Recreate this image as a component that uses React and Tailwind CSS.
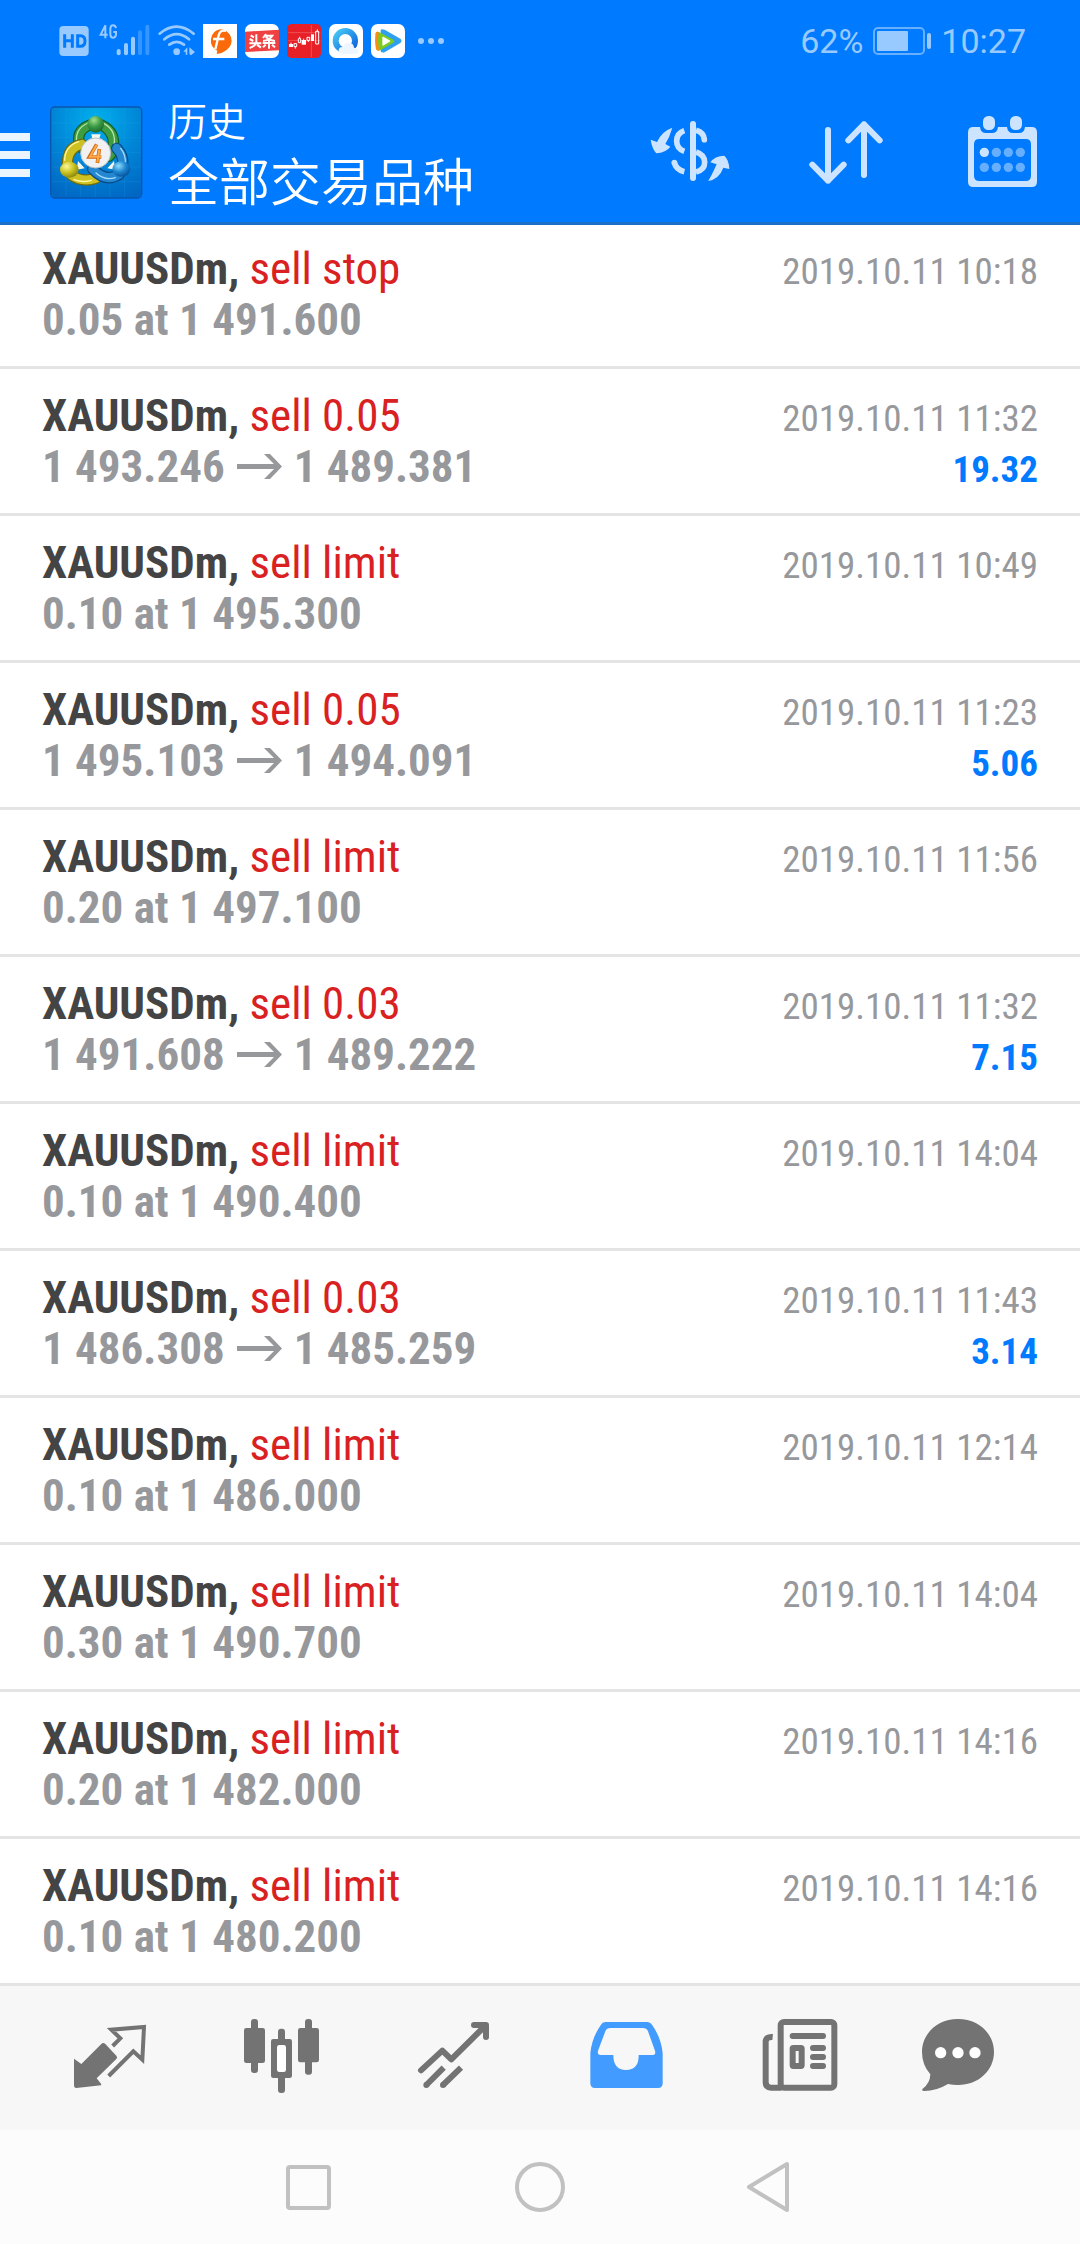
const TRADES = [
  { side: "sell stop", detail: "0.05 at 1 491.600", time: "2019.10.11 10:18" },
  { side: "sell 0.05", open: "1 493.246", close: "1 489.381", time: "2019.10.11 11:32", profit: "19.32" },
  { side: "sell limit", detail: "0.10 at 1 495.300", time: "2019.10.11 10:49" },
  { side: "sell 0.05", open: "1 495.103", close: "1 494.091", time: "2019.10.11 11:23", profit: "5.06" },
  { side: "sell limit", detail: "0.20 at 1 497.100", time: "2019.10.11 11:56" },
  { side: "sell 0.03", open: "1 491.608", close: "1 489.222", time: "2019.10.11 11:32", profit: "7.15" },
  { side: "sell limit", detail: "0.10 at 1 490.400", time: "2019.10.11 14:04" },
  { side: "sell 0.03", open: "1 486.308", close: "1 485.259", time: "2019.10.11 11:43", profit: "3.14" },
  { side: "sell limit", detail: "0.10 at 1 486.000", time: "2019.10.11 12:14" },
  { side: "sell limit", detail: "0.30 at 1 490.700", time: "2019.10.11 14:04" },
  { side: "sell limit", detail: "0.20 at 1 482.000", time: "2019.10.11 14:16" },
  { side: "sell limit", detail: "0.10 at 1 480.200", time: "2019.10.11 14:16" },
];

function SignalIcons() {
  return (
    <svg className="h-9 w-[138px]" viewBox="174 69 414 108" fill="#99caff" aria-hidden="true">
      <rect x="178" y="78" width="88" height="90" rx="12" />
      <g fill="none" stroke="#007aff" strokeWidth="9">
        <path d="M194 103v40M217 103v40M194 122h23M233 107v32h8q14 0 14-16t-14-16z" />
      </g>
      <g fill="none" stroke="#99caff" strokeWidth="6">
        <path d="M316 115V76l-14 28h21M348 84q-2-8-9-8t-8 10v18q1 9 8 9t9-9v-8h-8" />
      </g>
      <rect x="350" y="147" width="12" height="19" rx="6" />
      <rect x="372" y="129" width="12" height="37" rx="6" />
      <rect x="393" y="110" width="12" height="56" rx="6" />
      <rect x="414" y="91" width="12" height="75" rx="6" opacity=".35" />
      <rect x="436" y="74" width="12" height="92" rx="6" opacity=".35" />
      <g fill="none" stroke="#99caff" strokeWidth="8" strokeLinecap="round">
        <path d="M479 101q50-42 102 0M493 118q37-31 74 0M508 134q22-17 44 0" />
      </g>
      <circle cx="530" cy="155" r="10" />
      <path d="M550 155l12-13v22h-5v-9zM568 142l17 14-12 10q-5-2-5-8z" />
    </svg>
  );
}

function AppNotificationIcons() {
  return (
    <svg className="h-9 w-[204px]" viewBox="606 69 612 108" aria-hidden="true">
      <defs>
        <linearGradient id="browserRing" x1="0" y1="0" x2="1" y2="1">
          <stop offset="0" stopColor="#45c8f5" />
          <stop offset="1" stopColor="#0d62dc" />
        </linearGradient>
      </defs>
      <rect x="609" y="72" width="102" height="102" fill="#fff" />
      <path d="M660 88a34 34 0 0 1 20 62q-12 10-30 12l2-10a34 34 0 0 1 8-64z" fill="#fb6a0a" />
      <path d="M678 93q-18-5-22 13l-10 42M639 117h34" fill="none" stroke="#fff" strokeWidth="7" />

      <rect x="735" y="72" width="102" height="102" rx="20" fill="#fff" />
      <path d="M735 95l102-6v62l-102 5z" fill="#f04142" />
      <g fill="none" stroke="#fff" strokeWidth="6">
        <path d="M769 103v24q-3 12-20 17M748 130h36M752 106l10 6M749 117l11 6M771 134l12 9" />
        <path d="M798 102l-9 12M796 107h21q-8 13-28 16M797 111q12 10 28 12M788 129h38M807 120v26M797 134l-8 8M816 134l9 8" />
      </g>

      <rect x="861" y="72" width="102" height="102" rx="14" fill="#e71f26" />
      <path d="M865 98h96M865 122h96M934 75v96" stroke="#f3676b" strokeWidth="2" />
      <g fill="#fff">
        <rect x="867" y="132" width="12" height="9" />
        <rect x="905" y="120" width="13" height="14" />
        <rect x="933" y="103" width="9" height="20" />
      </g>
      <path d="M882 131h8v9h-8zM886 140v6M895 116h7v12h-7zM899 110v6M921 112h8v9h-8zM925 121v5M947 94h9v38h-9zM952 88v6M873 128v4M911 116v4" fill="none" stroke="#fff" strokeWidth="3" />

      <rect x="987" y="72" width="102" height="102" rx="20" fill="#fff" />
      <circle cx="1036" cy="122" r="29" fill="none" stroke="url(#browserRing)" strokeWidth="18" />
      <path d="M1030 162q-14-1-14-12 1-10 13-9 3-14 18-13 14 2 15 15 13 0 14 10-1 9-12 9z" fill="#eef7ff" />

      <rect x="1113" y="72" width="102" height="102" rx="20" fill="#fff" />
      <path d="M1142 89q4-3 12 0l47 27q7 6 0 13l-46 27q-10 4-13-2z" fill="#2f9ff0" />
      <path d="M1127 99q4-7 14-1l39 21q6 4 0 9l-38 22q-10 5-14-3-4-24-1-48z" fill="#7dcb1e" />
      <path d="M1127 99q3-5 9-3-5 28 1 56-7 0-9-5-4-24-1-48z" fill="#ff8a1c" />
      <path d="M1149 112l20 11-20 12z" fill="#fff" stroke="#fff" strokeWidth="4" strokeLinejoin="round" />
    </svg>
  );
}

function StatusBar() {
  return (
    <div className="flex h-[81px] items-center justify-between pl-[58px] pr-[54px] text-[34px] leading-none text-[#99caff]">
      <div className="flex items-center gap-1.5">
        <SignalIcons />
        <AppNotificationIcons />
        <svg className="ml-1 h-2 w-[30px]" viewBox="0 0 30 8" fill="#99caff" aria-hidden="true">
          <circle cx="5" cy="4" r="3" />
          <circle cx="15" cy="4" r="3" />
          <circle cx="25" cy="4" r="3" />
        </svg>
      </div>
      <div className="flex items-center gap-2.5">
        <span>62%</span>
        <svg className="h-7 w-[58px]" viewBox="0 0 58 28" aria-hidden="true">
          <rect x="1" y="1" width="50" height="26" rx="4" fill="none" stroke="#66b0ff" strokeWidth="2" />
          <rect x="4" y="4" width="31" height="20" rx="1" fill="#99caff" />
          <rect x="54" y="6" width="4" height="16" rx="2" fill="#99caff" />
        </svg>
        <span>10:27</span>
      </div>
    </div>
  );
}

function MetaTraderLogo() {
  return (
    <svg className="size-24" viewBox="144 46 288 288" aria-hidden="true">
      <defs>
        <radialGradient id="tile" cx=".5" cy=".15" r=".9">
          <stop offset="0" stopColor="#00b0ee" />
          <stop offset=".55" stopColor="#0084d6" />
          <stop offset="1" stopColor="#0068c4" />
        </radialGradient>
        <radialGradient id="greenBall" cx=".4" cy=".25" r=".8">
          <stop offset="0" stopColor="#a4e08c" />
          <stop offset=".5" stopColor="#3b9a45" />
          <stop offset="1" stopColor="#17642a" />
        </radialGradient>
        <radialGradient id="yellowBall" cx=".35" cy=".3" r=".8">
          <stop offset="0" stopColor="#fdf79a" />
          <stop offset=".5" stopColor="#c9c21f" />
          <stop offset="1" stopColor="#7c7a10" />
        </radialGradient>
        <radialGradient id="blueBall" cx=".35" cy=".3" r=".8">
          <stop offset="0" stopColor="#8fdcfb" />
          <stop offset=".5" stopColor="#1d86d2" />
          <stop offset="1" stopColor="#064a93" />
        </radialGradient>
      </defs>
      <rect x="152" y="52" width="273" height="273" rx="12" fill="url(#tile)" stroke="#0a56ae" strokeWidth="4" />
      <path d="M198 56v266M242 56v266M286 56v266M330 56v266M374 56v266M156 100h266M156 144h266M156 188h266M156 232h266M156 276h266" stroke="#39b5ef" strokeWidth="1.5" opacity=".3" />
      <g fill="none" strokeLinecap="round">
        <path d="M240 172q-16-50 30-66M304 106q46 22 34 74-4 14-12 20" stroke="#135c23" strokeWidth="34" />
        <path d="M240 172q-16-50 30-66M304 106q46 22 34 74-4 14-12 20" stroke="#3f9c40" strokeWidth="27" />
        <path d="M230 158q-6-40 34-58M312 102q38 20 30 68" stroke="#b5e5a6" strokeWidth="4" />
        <path d="M246 164q-44 8-44 60M214 256q32 24 74 10" stroke="#6d6a0e" strokeWidth="34" />
        <path d="M246 164q-44 8-44 60M214 256q32 24 74 10" stroke="#cdc022" strokeWidth="27" />
        <path d="M236 156q-42 14-42 56M222 270q26 10 52 2" stroke="#fff79d" strokeWidth="4" />
        <path d="M350 176q22 22 18 52M358 254q-40 26-80-16" stroke="#074a87" strokeWidth="34" />
        <path d="M350 176q22 22 18 52M358 254q-40 26-80-16" stroke="#2487cf" strokeWidth="27" />
        <path d="M362 176q16 20 14 46M346 264q-32 10-58-14" stroke="#a5deff" strokeWidth="4" />
      </g>
      <path d="M274 134h28l-6 18h-18zM234 214l20 22-24 4zM342 214l-20 22 24 4z" fill="#f3f7ee" />
      <circle cx="287" cy="104" r="25" fill="url(#greenBall)" />
      <ellipse cx="208" cy="240" rx="28" ry="24" fill="url(#yellowBall)" />
      <ellipse cx="364" cy="238" rx="27" ry="23" fill="url(#blueBall)" />
      <circle cx="287" cy="190" r="45" fill="#f1f1f4" stroke="#b9bfc6" strokeWidth="3" />
      <path d="M290 164l-22 38h36M298 178l-6 42" fill="none" stroke="#cf6a10" strokeWidth="11" />
      <path d="M290 165l-20 36h33M298 180l-6 38" fill="none" stroke="#ffa94a" strokeWidth="6" />
    </svg>
  );
}

function Header() {
  return (
    <header className="border-b-3 border-[#1a6fc9] bg-[#007aff] text-white">
      <StatusBar />
      <div className="flex h-[141px] items-center pt-0.5">
        <button type="button" aria-label="Menu" className="flex w-[30px] flex-col gap-2.5 pt-1">
          <span className="h-2 bg-[#ebf5ff]" />
          <span className="h-2 bg-[#ebf5ff]" />
          <span className="h-2 bg-[#ebf5ff]" />
        </button>
        <div className="ml-[18px] shrink-0">
          <MetaTraderLogo />
        </div>
        <div className="ml-6 pb-2 font-['Noto_Sans_CJK_SC',sans-serif] font-[350]">
          <h1 className="text-[39px] leading-[60px]">历史</h1>
          <p className="text-[51px] leading-[60px]">全部交易品种</p>
        </div>
        <div className="ml-auto flex">
          <button type="button" aria-label="Profit display" className="flex w-[156px] justify-center">
            <svg className="size-24" viewBox="66 45 288 288" aria-hidden="true">
              <g fill="none" stroke="#cce4ff" strokeWidth="17">
                <path d="M193 122q-23 8-23 31t23 31M193 245q-26-6-30-29" />
                <path d="M228 121q24 7 25 28" />
                <path d="M228 186q26 8 26 31t-26 29" />
              </g>
              <circle cx="163" cy="218" r="8.5" fill="#cce4ff" />
              <circle cx="253" cy="149" r="8.5" fill="#cce4ff" />
              <rect x="210" y="93" width="18" height="180" rx="9" fill="#cce4ff" />
              <path d="M157 113q-8 28-21 49l15 8q-13 18-42 20-13-14-17-41l19 7q14-32 46-43z" fill="#cce4ff" />
              <path d="M264 273q8-10 26-50l-19-6q13-19 42-20 14 13 15 40l-18-4q-12 34-46 40z" fill="#cce4ff" />
            </svg>
          </button>
          <button type="button" aria-label="Sort" className="flex w-[156px] justify-center">
            <svg className="size-24" viewBox="534 45 288 288" fill="none" stroke="#cce4ff" strokeWidth="18" strokeLinecap="round" strokeLinejoin="round" aria-hidden="true">
              <path d="M624 120v152M577 224l47 48 47-48M732 255V103M685 151l47-48 47 48" />
            </svg>
          </button>
          <button type="button" aria-label="Calendar" className="flex w-[156px] justify-center">
            <svg className="size-24" viewBox="1002 45 288 288" fill="#cce4ff" aria-hidden="true">
              <path fillRule="evenodd" d="M1060 111h20q2 18 18 18h18q16 0 18-18h27q2 18 18 18h18q16 0 18-18h20q16 0 16 16v148q0 16-16 16h-175q-16 0-16-16V127q0-16 16-16zM1078 147q-16 0-16 16v94q0 16 16 16h139q16 0 16-16v-94q0-16-16-16z" />
              <rect x="1089" y="78" width="36" height="42" rx="16" />
              <rect x="1170" y="78" width="36" height="42" rx="16" />
              <circle cx="1093" cy="187" r="14" />
              <g fill="#66afff">
                <circle cx="1129" cy="187" r="14" />
                <circle cx="1165" cy="187" r="14" />
                <circle cx="1201" cy="187" r="14" />
                <circle cx="1093" cy="232" r="14" />
                <circle cx="1129" cy="232" r="14" />
                <circle cx="1165" cy="232" r="14" />
                <circle cx="1201" cy="232" r="14" />
              </g>
            </svg>
          </button>
        </div>
      </div>
    </header>
  );
}

function PriceArrow() {
  return (
    <svg className="h-[25px] w-[45px]" viewBox="0 0 45 25" fill="#97989c" role="img" aria-label="to">
      <path d="M0 10h37l-10-10h6l12 12.5-12 12.5h-6l10-10H0z" />
    </svg>
  );
}

function TradeRow({ trade }) {
  return (
    <li className="border-b-3 border-[#e4e4e4] px-[42px] py-[21px] first:pt-[18px] last:border-b-0">
      <div className="flex h-[51px] items-baseline justify-between text-[45px] leading-[51px]">
        <p>
          <span className="font-bold text-[#444444]">XAUUSDm, </span>
          <span className="text-[#d92122]">{trade.side}</span>
        </p>
        <time className="text-[37px] text-[#97989c]">{trade.time}</time>
      </div>
      <div className="flex h-[51px] items-baseline justify-between text-[45px] font-bold leading-[51px] text-[#97989c]">
        {trade.detail ? (
          <p>{trade.detail}</p>
        ) : (
          <p className="flex items-center gap-3">
            <span>{trade.open}</span>
            <PriceArrow />
            <span>{trade.close}</span>
          </p>
        )}
        {trade.profit && <p className="text-[37px] text-[#007aff]">{trade.profit}</p>}
      </div>
    </li>
  );
}

function QuotesIcon() {
  return (
    <svg className="size-24" viewBox="6 27 288 288" fill="#737373" aria-hidden="true">
      <path d="M42 176l22 16 60-60q6-6 12 0l33 35q5 5 0 10l-59 58 14 18-1 3-74 8q-7 0-7-8z" />
      <path d="M158 138l23-23-27-26 98-8-5 98-27-25-74 74" fill="none" stroke="#737373" strokeWidth="12" />
    </svg>
  );
}

function ChartIcon() {
  return (
    <svg className="size-24" viewBox="522 27 288 288" fill="#737373" aria-hidden="true">
      <rect x="573" y="57" width="21" height="162" rx="9" />
      <rect x="552" y="84" width="63" height="105" rx="7" />
      <rect x="735" y="57" width="21" height="167" rx="9" />
      <rect x="714" y="84" width="63" height="103" rx="7" />
      <rect x="654" y="86" width="21" height="193" rx="9" />
      <rect x="633" y="117" width="63" height="117" rx="7" />
      <rect x="651" y="135" width="27" height="81" rx="7" fill="#fff" />
    </svg>
  );
}

function TradeIcon() {
  return (
    <svg className="size-24" viewBox="18 27 288 288" fill="none" stroke="#737373" strokeWidth="18" aria-hidden="true">
      <path d="M63 211l64-59 27 26 98-97" strokeLinecap="round" strokeLinejoin="round" />
      <path d="M222 75h36v36" strokeLinecap="round" strokeLinejoin="round" />
      <path d="M79 255l52-52M129 255l54-52" />
      <path d="M79 255h0.1M129 255h0.1" strokeLinecap="round" />
    </svg>
  );
}

function HistoryIcon() {
  return (
    <svg className="size-24" viewBox="534 27 288 288" fill="#429bff" aria-hidden="true">
      <path fillRule="evenodd" d="M616 66h126q9 0 14 8 28 40 32 86v90q0 14-14 14H585q-14 0-14-14v-90q4-46 32-86 4-8 13-8zM632 84q-12 0-16 10l-22 58q-3 13 8 13h38q0 45 38 45 39 0 38-45h39q14 0 10-13l-21-58q-4-10-16-10z" />
    </svg>
  );
}

function NewsIcon() {
  return (
    <svg className="size-24" viewBox="30 27 288 288" fill="none" stroke="#737373" strokeWidth="18" aria-hidden="true">
      <rect x="122" y="66" width="161" height="197" rx="10" />
      <path d="M98 111q-21-2-21 16v120q0 16 16 16h32" />
      <path d="M158 108h91M219 144h30M219 171h30M219 198h30" strokeLinecap="round" />
      <rect x="158" y="144" width="27" height="54" rx="2" />
    </svg>
  );
}

function MessagesIcon() {
  return (
    <svg className="size-24" viewBox="546 27 288 288" fill="#737373" aria-hidden="true">
      <path d="M654 57c62 0 108 44 108 99s-46 99-108 99q-16 0-30-3-35 21-71 21-10 0-5-7 22-15 23-43-25-28-25-67c0-55 46-99 108-99z" />
      <g fill="#fff">
        <circle cx="602" cy="158" r="17" />
        <circle cx="654" cy="158" r="17" />
        <circle cx="705" cy="158" r="17" />
      </g>
    </svg>
  );
}

const TABS = [
  { label: "Quotes", Icon: QuotesIcon },
  { label: "Charts", Icon: ChartIcon },
  { label: "Trade", Icon: TradeIcon },
  { label: "History", Icon: HistoryIcon, active: true },
  { label: "News", Icon: NewsIcon },
  { label: "Messages", Icon: MessagesIcon },
];

function TabBar() {
  return (
    <nav className="grid grid-cols-6 border-t-3 border-[#e4e4e4] bg-[#f7f7f7] px-6 pb-3 pt-[23px]">
      {TABS.map(({ label, Icon, active }) => (
        <button key={label} type="button" aria-label={label} aria-current={active ? "page" : undefined} className="flex h-[109px] justify-center">
          <Icon />
        </button>
      ))}
    </nav>
  );
}

function SystemBar() {
  return (
    <div className="flex h-[114px] items-center justify-center gap-[135px] bg-[#fcfcfc]">
      <button type="button" aria-label="Recent apps" className="flex w-24 justify-center">
        <svg className="size-[54px]" viewBox="0 0 54 54" fill="none" stroke="#c1c1c1" strokeWidth="4" aria-hidden="true">
          <rect x="6" y="7" width="41" height="41" rx="2" />
        </svg>
      </button>
      <button type="button" aria-label="Home" className="flex w-24 justify-center">
        <svg className="size-[54px]" viewBox="0 0 54 54" fill="none" stroke="#c1c1c1" strokeWidth="4" aria-hidden="true">
          <circle cx="27" cy="27" r="23" />
        </svg>
      </button>
      <button type="button" aria-label="Back" className="flex w-24 justify-center">
        <svg className="size-[54px]" viewBox="0 0 54 54" fill="none" stroke="#c1c1c1" strokeWidth="4" strokeLinejoin="round" aria-hidden="true">
          <path d="M5 27L43 4v46z" />
        </svg>
      </button>
    </div>
  );
}

export default function App() {
  return (
    <div className="flex min-h-screen flex-col bg-white font-['Roboto',sans-serif]">
      <Header />
      <main className="flex-1 font-['Roboto_Condensed','Roboto',sans-serif]">
        <ul>
          {TRADES.map((trade, index) => (
            <TradeRow key={index} trade={trade} />
          ))}
        </ul>
      </main>
      <TabBar />
      <SystemBar />
    </div>
  );
}
